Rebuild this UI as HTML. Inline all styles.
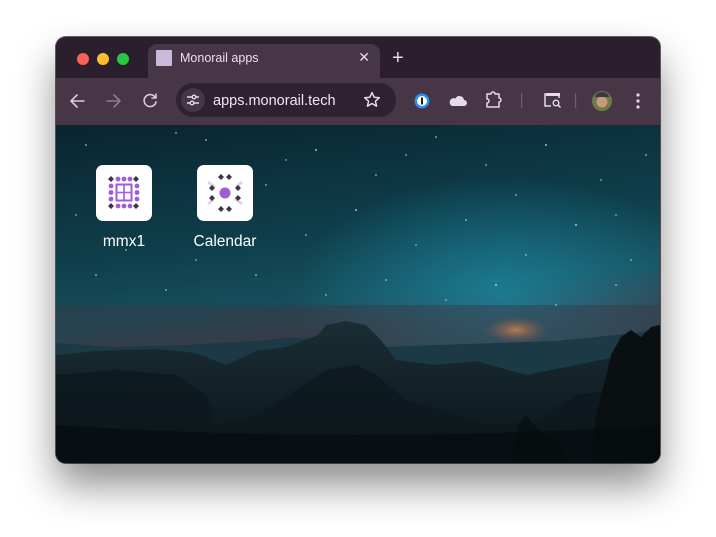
<!DOCTYPE html>
<html><head><meta charset="utf-8"><style>
*{margin:0;padding:0;box-sizing:border-box}
body{width:716px;height:537px;background:#fff;position:relative;overflow:hidden;font-family:"Liberation Sans",sans-serif}
.win{position:absolute;left:56px;top:37px;width:604px;height:426px;border-radius:10px;overflow:hidden;background:#2b1f2e;box-shadow:0 22px 40px rgba(0,0,0,.45),0 0 0 1px rgba(0,0,0,.6)}
.tabs{position:absolute;left:0;top:0;width:604px;height:41px;background:#2b1f2e}
.dot{position:absolute;top:16px;width:12px;height:12px;border-radius:50%}
.tab{position:absolute;left:92px;top:7px;width:232px;height:36px;background:#463646;border-radius:9px 9px 0 0}
.tab .fav{position:absolute;left:8px;top:6px;width:16px;height:16px;background:#cbb8dd;border-radius:1px}
.tab .t{position:absolute;left:32px;top:7px;font-size:12.5px;color:#ecdff0}
.tab .x{position:absolute;right:10px;top:5px;font-size:14px;color:#e6dbe8}
.plus{position:absolute;left:336px;top:10px;color:#e6dbe8;font-size:20px}
.bar{position:absolute;left:0;top:41px;width:604px;height:47px;background:#463646}
.omni{position:absolute;left:120px;top:5px;width:220px;height:34px;background:#2e2130;border-radius:17px}
.omni .ic{position:absolute;left:5px;top:5px;width:24px;height:24px;border-radius:50%;background:#463646}
.omni .u{position:absolute;left:37px;top:10px;font-size:14.5px;color:#f0e6f2}
.content{position:absolute;left:0;top:88px;width:604px;height:338px}
.app{position:absolute;top:40px;width:56px;height:56px;background:#fff;border-radius:7px}
.lbl{position:absolute;top:108px;color:#fff;font-size:15.5px;text-align:center;width:80px}
</style></head><body>
<div class="win">
 <div class="tabs">
  <div class="dot" style="left:21px;background:#fe5f57"></div>
  <div class="dot" style="left:41px;background:#febc2e"></div>
  <div class="dot" style="left:61px;background:#28c840"></div>
  <div class="tab"><div class="fav"></div><div class="t">Monorail apps</div><div class="x">✕</div></div>
  <div class="plus">+</div>
 </div>
 <div class="bar">
  <svg width="604" height="47" style="position:absolute;left:0;top:0" fill="none" stroke="#d9cbdc" stroke-width="1.6" stroke-linecap="round" stroke-linejoin="round">
   <path d="M28 23h-12M21 17l-6 6 6 6"/>
   <path d="M51 23h12M58 17l6 6-6 6" stroke="#8c7c8f"/>
   <path d="M99 19a6 6 0 1 0 1 5M100 16v4h-4"/>
  </svg>
  <div class="omni"><div class="ic"><svg width="24" height="24" fill="none" stroke="#e6dbe8" stroke-width="1.4"><path d="M6 9h5M15 9h3M6 15h3M13 15h5"/><circle cx="13" cy="9" r="1.8"/><circle cx="11" cy="15" r="1.8"/></svg></div><div class="u">apps.monorail.tech</div>
   <svg width="20" height="20" style="position:absolute;left:186px;top:7px" fill="none" stroke="#e6dbe8" stroke-width="1.5" stroke-linejoin="round"><path d="M10 2.5l2.2 4.8 5.1.5-3.9 3.4 1.2 5-4.6-2.7-4.6 2.7 1.2-5L2.7 7.8l5.1-.5z"/></svg>
  </div>
  <svg width="604" height="47" style="position:absolute;left:0;top:0;pointer-events:none">
   <circle cx="366" cy="23" r="7.5" fill="#2f8cf0"/><circle cx="366" cy="23" r="5" fill="#fff"/><rect x="365" y="19.5" width="2" height="7" fill="#123"/>
   <path d="M396 28h12a3 3 0 0 0 0-6 4.5 4.5 0 0 0-8.5-1.5A3.5 3.5 0 0 0 396 28z" fill="#e6dbe8"/>
   <path d="M431 16h4a2 2 0 0 1 4 0h4v4a2 2 0 0 1 0 4v5h-12v-4a2 2 0 0 0 0-4z" fill="none" stroke="#e6dbe8" stroke-width="1.5" stroke-linejoin="round"/>
   <rect x="465" y="15" width="1.2" height="15" fill="#6e5e70"/>
   <rect x="519" y="15" width="1.2" height="15" fill="#6e5e70"/>
   <path d="M495 28h-6v-12h14v4" fill="none" stroke="#e6dbe8" stroke-width="1.5"/><rect x="490" y="15" width="14" height="3" fill="#e6dbe8"/>
   <circle cx="500" cy="25" r="2.8" fill="none" stroke="#e6dbe8" stroke-width="1.4"/><path d="M502 27l2.5 2.5" stroke="#e6dbe8" stroke-width="1.5"/>
   <circle cx="546" cy="23" r="10" fill="#6f7a4a"/><circle cx="546" cy="24" r="5.5" fill="#c99a7a"/><path d="M539 19a7 5 0 0 1 14 0z" fill="#3a3a3a"/>
   <circle cx="582" cy="17" r="1.6" fill="#e6dbe8"/><circle cx="582" cy="23" r="1.6" fill="#e6dbe8"/><circle cx="582" cy="29" r="1.6" fill="#e6dbe8"/>
  </svg>
 </div>
 <div class="content">
  <svg width="604" height="338" style="position:absolute;left:0;top:0">
   <defs>
    <linearGradient id="sky" x1="0" y1="0" x2="0.2" y2="1"><stop offset="0" stop-color="#0a2430"/><stop offset="0.4" stop-color="#0f3f4c"/><stop offset="0.58" stop-color="#174e5c"/><stop offset="0.68" stop-color="#34404c"/></linearGradient>
    <radialGradient id="glow" cx="0.74" cy="0.5" r="0.35"><stop offset="0" stop-color="#1c8aa3" stop-opacity=".75"/><stop offset="1" stop-color="#1c8aa3" stop-opacity="0"/></radialGradient>
    <radialGradient id="or" cx="0.5" cy="0.5" r="0.5"><stop offset="0" stop-color="#c9834f" stop-opacity=".9"/><stop offset="1" stop-color="#7a4e48" stop-opacity="0"/></radialGradient>
    <linearGradient id="fg" x1="0" y1="0" x2="0" y2="1"><stop offset="0" stop-color="#1a2e35"/><stop offset="1" stop-color="#0a1316"/></linearGradient>
   </defs>
   <rect width="604" height="338" fill="url(#sky)"/>
   <rect width="604" height="338" fill="url(#glow)"/>
   <rect x="0" y="180" width="604" height="45" fill="#3b3744" opacity=".45"/>
   <ellipse cx="460" cy="205" rx="34" ry="14" fill="url(#or)"/>
   <g fill="#cfe8ee">
    <circle cx="30" cy="20" r=".8"/><circle cx="90" cy="45" r=".7"/><circle cx="150" cy="15" r=".8"/><circle cx="210" cy="60" r=".7"/><circle cx="260" cy="25" r=".9"/><circle cx="320" cy="50" r=".7"/><circle cx="380" cy="12" r=".8"/><circle cx="430" cy="40" r=".7"/><circle cx="490" cy="20" r=".9"/><circle cx="545" cy="55" r=".7"/><circle cx="590" cy="30" r=".8"/><circle cx="20" cy="90" r=".7"/><circle cx="170" cy="95" r=".8"/><circle cx="250" cy="110" r=".7"/><circle cx="300" cy="85" r=".9"/><circle cx="360" cy="120" r=".7"/><circle cx="410" cy="95" r=".8"/><circle cx="470" cy="130" r=".7"/><circle cx="520" cy="100" r=".9"/><circle cx="575" cy="135" r=".7"/><circle cx="40" cy="150" r=".8"/><circle cx="110" cy="165" r=".7"/><circle cx="200" cy="150" r=".8"/><circle cx="270" cy="170" r=".7"/><circle cx="330" cy="155" r=".8"/><circle cx="390" cy="175" r=".7"/><circle cx="440" cy="160" r=".9"/><circle cx="500" cy="180" r=".7"/><circle cx="560" cy="160" r=".8"/><circle cx="120" cy="8" r=".7"/><circle cx="230" cy="35" r=".7"/><circle cx="350" cy="30" r=".7"/><circle cx="460" cy="70" r=".7"/><circle cx="560" cy="90" r=".7"/><circle cx="70" cy="125" r=".7"/><circle cx="140" cy="135" r=".7"/>
   </g>
   <path d="M0 218 L60 222 L130 220 L200 216 L240 212 L262 216 L290 218 L330 222 L380 220 L440 218 L500 216 L560 210 L604 205 L604 338 L0 338Z" fill="#1c3a45"/>
   <path d="M0 230 L40 226 L100 224 L140 228 L170 240 L200 226 L230 222 L262 210 L270 200 L290 196 L310 200 L325 215 L340 235 L380 240 L420 236 L470 250 L520 240 L560 232 L604 228 L604 338 L0 338Z" fill="url(#fg)"/>
   <path d="M0 250 L60 245 L120 250 L150 270 L160 300 L200 290 L240 265 L270 245 L300 240 L320 250 L350 275 L400 290 L430 300 L470 300 L490 290 L520 270 L604 260 L604 338 L0 338Z" fill="#0d191d" opacity=".85"/>
   <path d="M535 338 L540 290 L548 260 L555 230 L565 212 L575 205 L585 212 L595 202 L604 200 L604 338Z" fill="#0a1012"/>
   <path d="M455 338 L462 300 L470 290 L478 300 L490 310 L505 320 L512 338Z" fill="#0a1114"/>
   <path d="M0 300 Q300 320 604 300 L604 338 L0 338Z" fill="#05090b" opacity=".55"/>
  </svg>
  <div class="app" style="left:40px">
   <svg width="56" height="56"><g fill="#3e3443">
    <path d="M15 11l3 3-3 3-3-3zM40 11l3 3-3 3-3-3zM15 38l3 3-3 3-3-3zM40 38l3 3-3 3-3-3z"/></g>
    <g fill="#a05bd6"><circle cx="22" cy="14" r="2.4"/><circle cx="28" cy="14" r="2.4"/><circle cx="34" cy="14" r="2.4"/><circle cx="22" cy="41" r="2.4"/><circle cx="28" cy="41" r="2.4"/><circle cx="34" cy="41" r="2.4"/><circle cx="15" cy="21" r="2.4"/><circle cx="15" cy="27.5" r="2.4"/><circle cx="15" cy="34" r="2.4"/><circle cx="41" cy="21" r="2.4"/><circle cx="41" cy="27.5" r="2.4"/><circle cx="41" cy="34" r="2.4"/></g>
    <rect x="20.5" y="19.5" width="15" height="16" fill="none" stroke="#a05bd6" stroke-width="2"/><path d="M28 19.5v16M20.5 27.5h15" stroke="#a05bd6" stroke-width="1.6"/>
   </svg>
  </div>
  <div class="lbl" style="left:28px">mmx1</div>
  <div class="app" style="left:141px">
   <svg width="56" height="56"><path d="M11 17l7 5M45 39l-7-5M45 17l-6 5M11 39l6-5" stroke="#d8d4dc" stroke-width="2.5"/>
    <g fill="#3e3443"><path d="M24 9l3 3-3 3-3-3zM32 9l3 3-3 3-3-3zM24 41l3 3-3 3-3-3zM32 41l3 3-3 3-3-3zM15 20l3 3-3 3-3-3zM15 30l3 3-3 3-3-3zM41 20l3 3-3 3-3-3zM41 30l3 3-3 3-3-3z"/></g>
    <circle cx="28" cy="28" r="5.5" fill="#a05bd6"/></svg>
  </div>
  <div class="lbl" style="left:129px">Calendar</div>
 </div>
</div>
</body></html>
